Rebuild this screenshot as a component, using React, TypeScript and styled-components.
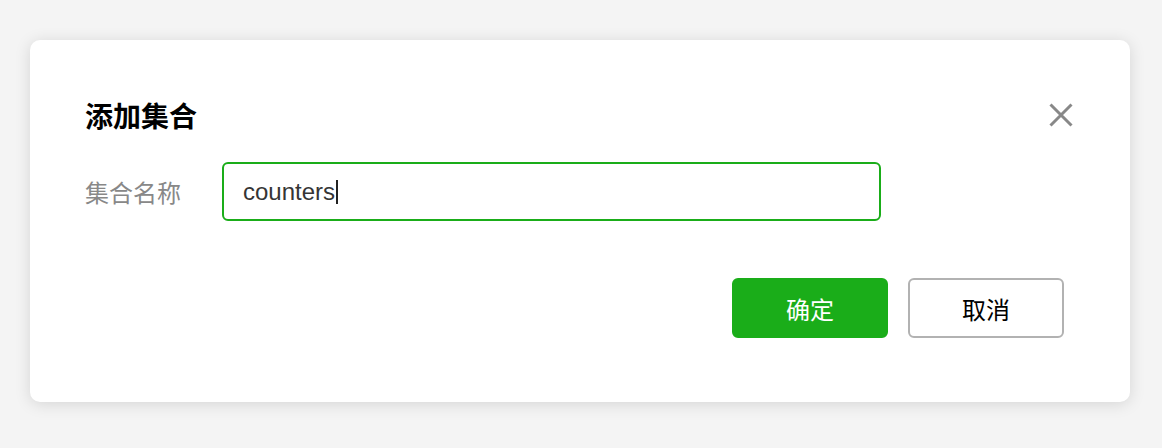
import React from 'react';
import styled, { createGlobalStyle } from 'styled-components';

const GlobalStyle = createGlobalStyle`
    html, body {
        margin: 0;
        padding: 0;
        background: #f4f4f4;
    }
    body {
        font-family: "Liberation Sans", "Noto Sans CJK SC", sans-serif;
    }
`;

const Page = styled.div`
    width: 1162px;
    height: 448px;
    padding: 40px 32px 0 30px;
    box-sizing: border-box;
`;

const Dialog = styled.div`
    width: 1100px;
    height: 362px;
    box-sizing: border-box;
    background: #fff;
    border-radius: 10px;
    box-shadow: 0 2px 16px rgba(0, 0, 0, 0.13);
    padding: 55px 57px 0 55px;
    display: flex;
    flex-direction: column;
`;

const Header = styled.div`
    display: flex;
    align-items: center;
    justify-content: space-between;
    height: 40px;
`;

const Title = styled.h2`
    margin: 0;
    font-family: "Noto Sans CJK SC", sans-serif;
    font-size: 28px;
    font-weight: 700;
    line-height: 40px;
    color: #000;
`;

const CloseButton = styled.button`
    border: 0;
    background: none;
    padding: 0;
    width: 24px;
    height: 24px;
    display: flex;
    align-items: center;
    justify-content: center;
    cursor: pointer;
`;

const FormRow = styled.div`
    display: flex;
    align-items: center;
    margin-top: 27px;
`;

const Label = styled.label`
    width: 137px;
    flex-shrink: 0;
    font-family: "Noto Sans CJK SC", sans-serif;
    font-size: 24px;
    color: #888;
`;

const Field = styled.div`
    width: 659px;
    height: 59px;
    box-sizing: border-box;
    border: 2px solid #1aad19;
    border-radius: 6px;
    padding: 0 19px;
    display: flex;
    align-items: center;
    font-family: "Liberation Sans", "Noto Sans CJK SC", sans-serif;
    font-size: 24px;
    color: #353535;
`;

const Caret = styled.span`
    display: inline-block;
    width: 2px;
    height: 24px;
    margin-left: 1px;
    background: #222;
`;

const Footer = styled.div`
    display: flex;
    justify-content: flex-end;
    gap: 20px;
    margin-top: 57px;
    padding-right: 9px;
`;

const Button = styled.button<{ $primary?: boolean }>`
    width: 156px;
    height: 60px;
    box-sizing: border-box;
    border-radius: 6px;
    border: 2px solid ${(p) => (p.$primary ? '#1aad19' : '#b2b2b2')};
    background: ${(p) => (p.$primary ? '#1aad19' : '#fff')};
    color: ${(p) => (p.$primary ? '#fff' : '#000')};
    font-family: "Noto Sans CJK SC", sans-serif;
    font-size: 24px;
    cursor: pointer;
`;

export default function App() {
    return (
        <>
            <GlobalStyle />
            <Page>
                <Dialog>
                    <Header>
                        <Title>添加集合</Title>
                        <CloseButton aria-label="关闭">
                            <svg width="24" height="24" viewBox="0 0 24 24">
                                <path d="M1.5 1.5 L22.5 22.5 M22.5 1.5 L1.5 22.5" stroke="#888" strokeWidth="3" />
                            </svg>
                        </CloseButton>
                    </Header>
                    <FormRow>
                        <Label>集合名称</Label>
                        <Field>
                            counters
                            <Caret />
                        </Field>
                    </FormRow>
                    <Footer>
                        <Button $primary>确定</Button>
                        <Button>取消</Button>
                    </Footer>
                </Dialog>
            </Page>
        </>
    );
}
